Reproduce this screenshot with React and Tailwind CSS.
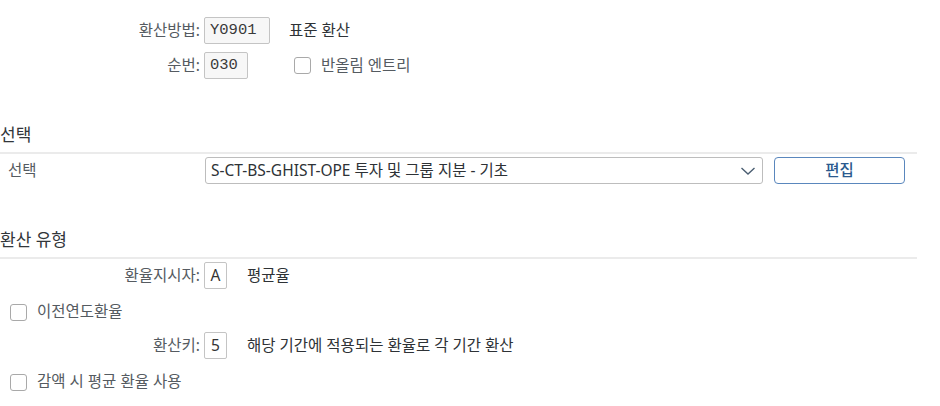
import React from "react";

const sans = { fontFamily: '"Noto Sans", "Noto Sans CJK KR", sans-serif' };

function Check() {
  return <div className="w-[17px] h-[17px] rounded-[3px] border border-[#a9a9a9] bg-white shrink-0" />;
}

function Label({ children }) {
  return <div className="w-[201px] text-right text-[15.5px] text-[#555b61] shrink-0 pr-[1px]">{children}</div>;
}

export default function App() {
  return (
    <div className="w-[940px] h-[406px] bg-white overflow-hidden" style={sans}>
      <div className="w-[917px]">
        {/* top rows */}
        <div className="flex items-center h-[27px] mt-[17px]">
          <Label>환산방법:</Label>
          <div className="ml-[3px] w-[66px] h-[27px] border border-[#c4c4c4] rounded-[2px] bg-[#f7f7f7] flex items-center pl-[5px] text-[15.5px] text-[#3a3a3a]" style={{ fontFamily: '"Liberation Mono", monospace' }}>Y0901</div>
          <div className="ml-[19px] text-[15.5px] text-[#2e3236]">표준 환산</div>
        </div>
        <div className="flex items-center h-[27px] mt-[8px]">
          <Label>순번:</Label>
          <div className="ml-[3px] w-[44px] h-[27px] border border-[#c4c4c4] rounded-[2px] bg-[#f7f7f7] flex items-center pl-[5px] text-[15.5px] text-[#3a3a3a]" style={{ fontFamily: '"Liberation Mono", monospace' }}>030</div>
          <div className="ml-[46px] flex items-center gap-[10px]">
            <Check />
            <span className="text-[15.5px] text-[#555b61]">반올림 엔트리</span>
          </div>
        </div>

        {/* 선택 section */}
        <div className="mt-[44px] h-[31px] border-b-2 border-[#ebebeb] text-[17px] leading-[24px] text-[#32363a]">선택</div>
        <div className="flex items-center h-[27px] mt-[3px]">
          <div className="w-[205px] pl-[8px] text-[15.5px] text-[#555b61] shrink-0">선택</div>
          <div className="w-[558px] h-[27px] border border-[#bdbdbd] rounded-[3px] bg-white flex items-center justify-between pl-[5px] pr-[6px]">
            <span className="text-[15.5px] text-[#2e3236]">S-CT-BS-GHIST-OPE 투자 및 그룹 지분 - 기초</span>
            <svg width="16" height="10" viewBox="0 0 16 10" fill="none">
              <path d="M1.5 2 L8 8 L14.5 2" stroke="#4b5e72" strokeWidth="1.4" />
            </svg>
          </div>
          <div className="ml-[11px] w-[131px] h-[27px] border border-[#5a87bd] rounded-[4px] bg-white flex items-center justify-center text-[15.5px] font-medium text-[#2b5a8e]">편집</div>
        </div>

        {/* 환산 유형 section */}
        <div className="mt-[44px] h-[31px] border-b-2 border-[#ebebeb] text-[17px] leading-[24px] text-[#32363a]">환산 유형</div>
        <div className="flex items-center h-[27px] mt-[3px]">
          <Label>환율지시자:</Label>
          <div className="ml-[3px] w-[23px] h-[27px] border border-[#c4c4c4] rounded-[2px] bg-white flex items-center justify-center text-[15.5px] text-[#333]">A</div>
          <div className="ml-[20px] text-[15.5px] text-[#2e3236]">평균율</div>
        </div>
        <div className="flex items-center h-[28px] mt-[9px] pl-[10px] gap-[10px]">
          <Check />
          <span className="text-[15.5px] text-[#555b61]">이전연도환율</span>
        </div>
        <div className="flex items-center h-[27px] mt-[6px]">
          <Label>환산키:</Label>
          <div className="ml-[3px] w-[23px] h-[27px] border border-[#c4c4c4] rounded-[2px] bg-white flex items-center justify-center text-[15.5px] text-[#333]">5</div>
          <div className="ml-[20px] text-[15.5px] text-[#2e3236]">해당 기간에 적용되는 환율로 각 기간 환산</div>
        </div>
        <div className="flex items-center h-[28px] mt-[9px] pl-[10px] gap-[10px]">
          <Check />
          <span className="text-[15.5px] text-[#555b61]">감액 시 평균 환율 사용</span>
        </div>
      </div>
    </div>
  );
}
